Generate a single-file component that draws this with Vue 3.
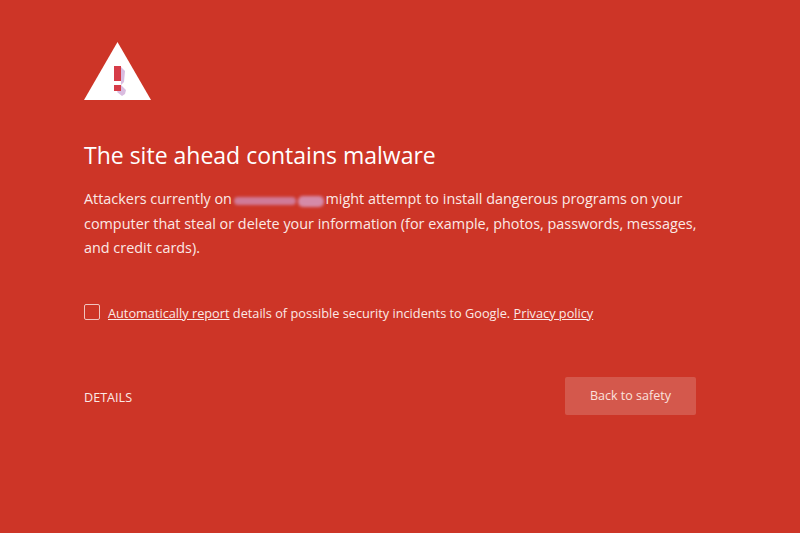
<template>
  <div class="page">
    <div class="warning">
      <svg class="icon" width="67" height="58" viewBox="0 0 67 58">
        <path d="M33.5 0L67 58H0z" fill="#fff" />
        <path class="shade" d="M37 25l4 4-1 11-3 3zM37 43l5 5-1 4-3 2-5-4z" fill="#d9bce0" />
        <rect x="30" y="24" width="7" height="15" fill="#d63c48" />
        <rect x="30" y="43" width="7" height="6" fill="#d63c48" />
      </svg>
      <h1>The site ahead contains malware</h1>
      <p class="message">
        Attackers currently on <span class="blurred"><i class="blur-a"></i><i class="blur-b"></i></span> might attempt to install dangerous programs on your<br />
        computer that steal or delete your information (for example, photos, passwords, messages,<br />
        and credit cards).
      </p>
      <div class="report">
        <span class="checkbox"></span>
        <span class="report-text"><a>Automatically report</a> details of possible security incidents to Google. <a>Privacy policy</a></span>
      </div>
      <div class="actions">
        <span class="details">DETAILS</span>
        <button class="back">Back to safety</button>
      </div>
    </div>
  </div>
</template>

<script setup>
</script>

<style>
html, body {
  margin: 0;
  background: #cd3527;
}
</style>

<style scoped>
.page {
  height: 533px;
  background: #cd3527;
  color: #fff;
  font-family: "Open Sans", "Noto Sans", sans-serif;
  overflow: hidden;
}

.warning {
  width: 612px;
  padding: 42px 0 0 84px;
}

.icon {
  display: block;
}

.shade {
  filter: blur(0.6px);
}

h1 {
  margin: 39px 0 0;
  font-size: 23px;
  line-height: 32px;
  font-weight: 400;
}

.message {
  margin: 16px 0 0;
  font-size: 14.4px;
  line-height: 24.5px;
  color: #fbe9e6;
  white-space: nowrap;
}

.blurred {
  display: inline-flex;
  align-items: center;
  gap: 2px;
  width: 90px;
  height: 12px;
  margin: 0 -2px;
  vertical-align: -1px;
  filter: blur(1.5px);
}

.blur-a {
  width: 62px;
  height: 8px;
  border-radius: 4px;
  background: #d07a98;
}

.blur-b {
  width: 26px;
  height: 11px;
  border-radius: 5px;
  background: #d58aa8;
}

.report {
  display: flex;
  align-items: center;
  gap: 8px;
  margin-top: 42px;
}

.checkbox {
  width: 14px;
  height: 14px;
  margin-bottom: 2px;
  border: 1px solid #f0c4bf;
  border-radius: 2px;
  flex: none;
}

.report-text {
  font-size: 12.74px;
  line-height: 20px;
  color: #fbe9e6;
}

.report-text a {
  text-decoration: underline;
}

.actions {
  display: flex;
  justify-content: space-between;
  align-items: center;
  margin-top: 54px;
}

.details {
  padding-top: 3px;
  font-size: 12.6px;
  color: #fbe9e6;
}

.back {
  width: 131px;
  height: 38px;
  border: none;
  border-radius: 2px;
  background: #d4584c;
  color: #fbe1dd;
  font-family: inherit;
  font-size: 12.5px;
}
</style>
